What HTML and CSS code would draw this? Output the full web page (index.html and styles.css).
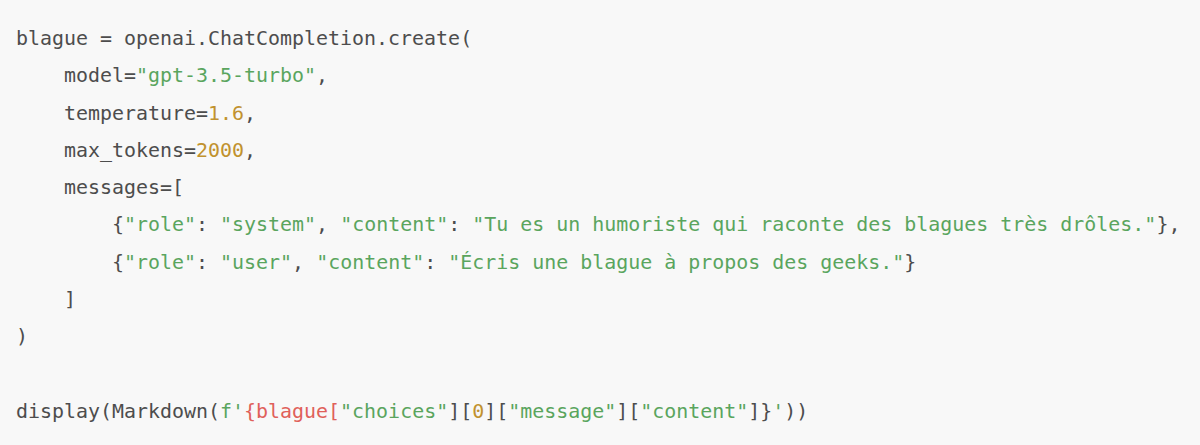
FILE: index.html
```html
<!DOCTYPE html>
<html lang="fr">
<head>
<meta charset="utf-8">
<link rel="stylesheet" href="styles.css">
</head>
<body>
<div class="code-block">
<pre class="code"><code>blague = openai.ChatCompletion.create(
    model=<span class="s">"gpt-3.5-turbo"</span>,
    temperature=<span class="n">1.6</span>,
    max_tokens=<span class="n">2000</span>,
    messages=[
        {<span class="s">"role"</span>: <span class="s">"system"</span>, <span class="s">"content"</span>: <span class="s">"Tu es un humoriste qui raconte des blagues très drôles."</span>},
        {<span class="s">"role"</span>: <span class="s">"user"</span>, <span class="s">"content"</span>: <span class="s">"Écris une blague à propos des geeks."</span>}
    ]
)

display(Markdown(<span class="s">f'</span><span class="r">{blague[</span><span class="s">"choices"</span>][<span class="n">0</span>][<span class="s">"message"</span>][<span class="s">"content"</span>]}<span class="s">'</span>))</code></pre>
</div>
</body>
</html>
```
FILE: styles.css
```css
html, body {
  margin: 0;
  padding: 0;
  background: #f8f8f8;
}
.code-block {
  width: 1200px;
  height: 445px;
  box-sizing: border-box;
  padding: 20px 0 0 16px;
  background: #f8f8f8;
}
.code {
  margin: 0;
  font-family: "DejaVu Sans Mono", "Liberation Mono", monospace;
  font-size: 19.95px;
  line-height: 37.3px;
  color: #4d4d4d;
  white-space: pre;
}
.s { color: #5aa55e; }
.n { color: #c1922f; }
.r { color: #e0605a; }
```
